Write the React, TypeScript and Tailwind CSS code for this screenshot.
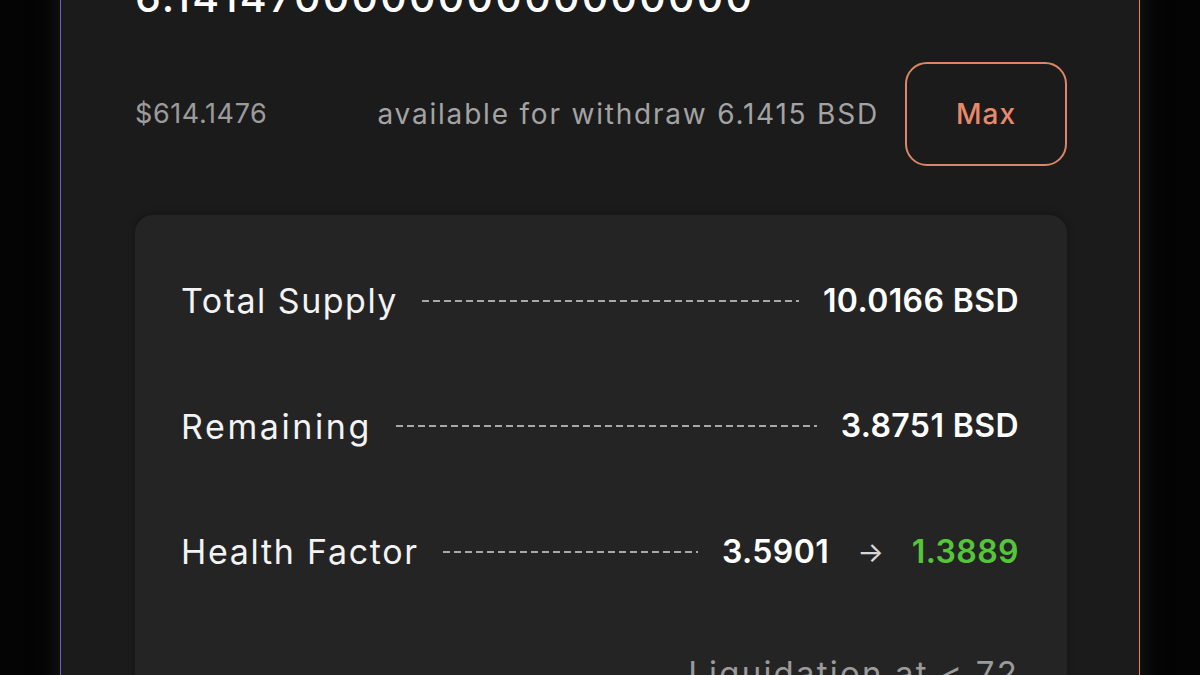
import React from "react";

const Dash = () => (
  <div className="flex-1 h-[2px] mx-[24px] bg-[repeating-linear-gradient(90deg,#a8a8a8_0px,#a8a8a8_7px,transparent_7px,transparent_11px)]" />
);

export default function App() {
  return (
    <div className="w-[1200px] h-[675px] overflow-hidden bg-[#040404] font-['Inter',sans-serif]">
      <div className="ml-[60px] w-[1080px] h-[760px] -mt-[40px] bg-[#1b1b1b] border-l border-r border-l-[#6a5fc0] border-r-[#e0874a] pl-[74px] pr-[72px] shadow-[0_0_24px_rgba(30,30,30,0.9)]">
        <div className="h-[64px] flex items-end text-[41px] leading-[40px] font-medium text-white tracking-[2.3px]">
          <span className="translate-y-[-7px]">6.141470000000000000000</span>
        </div>
        <div className="mt-[38px] flex items-center h-[104px]">
          <span className="text-[27px] text-[#9b9b9b] tracking-[0.6px]">$614.1476</span>
          <span className="flex-1 text-right mr-[26px] text-[28px] text-[#a3a3a3] tracking-[1.8px]">
            available for withdraw 6.1415 BSD
          </span>
          <button className="w-[162px] h-[104px] rounded-[22px] border-2 border-[#d98765] text-[28px] font-medium text-[#e8896a] tracking-[1px]">
            Max
          </button>
        </div>
        <div className="mt-[49px] bg-[#242424] rounded-[18px] pl-[46px] pr-[48px] pt-[23px] pb-[40px] shadow-[0_-2px_6px_rgba(0,0,0,0.25)]">
          <div className="h-[125px] flex items-center">
            <span className="text-[#f3f3f3] text-[34px] tracking-[1.5px]">Total Supply</span>
            <Dash />
            <span className="text-white font-semibold text-[32px] tracking-[0.4px]">10.0166 BSD</span>
          </div>
          <div className="h-[126px] flex items-center">
            <span className="text-[#f3f3f3] text-[34px] tracking-[2.6px]">Remaining</span>
            <Dash />
            <span className="text-white font-semibold text-[32px] tracking-[0.4px]">3.8751 BSD</span>
          </div>
          <div className="h-[125px] flex items-center">
            <span className="text-[#f3f3f3] text-[34px] tracking-[1.7px]">Health Factor</span>
            <Dash />
            <span className="text-white font-semibold text-[32px] tracking-[0.4px]">3.5901</span>
            <span className="text-[#d8d8d8] text-[28px] mx-[28px]">→</span>
            <span className="text-[#55c53a] font-semibold text-[32px] tracking-[0.4px]">1.3889</span>
          </div>
          <div className="h-[80px] flex items-center justify-end text-[33px] text-[#9b9b9b] tracking-[2.2px] pt-[40px]">
            Liquidation at &lt; 72
          </div>
        </div>
      </div>
    </div>
  );
}
